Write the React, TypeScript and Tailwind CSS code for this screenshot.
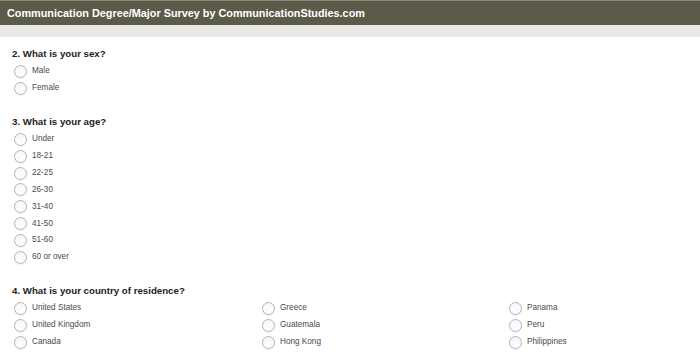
const sexOptions = ["Male", "Female"]
const ageOptions = ["Under", "18-21", "22-25", "26-30", "31-40", "41-50", "51-60", "60 or over"]
const countryCols = [
    ["United States", "United Kingdom", "Canada"],
    ["Greece", "Guatemala", "Hong Kong"],
    ["Panama", "Peru", "Philippines"]
]

const Radio = ({ label }: { label: string }) => (
    <label className="flex items-center h-[16.9px] gap-[5px] cursor-pointer">
        <span className="w-[13px] h-[13px] rounded-full border border-[#b3b3b3] bg-gradient-to-b from-[#f6f6f6] to-[#ffffff] shadow-[0_1px_1px_rgba(0,0,0,0.06)] shrink-0" />
        <span className="text-[8.2px] text-[#4a4a4a] leading-none">{label}</span>
    </label>
)

const Question = ({ title, children }: { title: string; children: React.ReactNode }) => (
    <div className="mb-[18px]">
        <h2 className="h-[14px] flex items-center pl-[12px] text-[9.7px] font-bold text-[#222222] leading-none">{title}</h2>
        <div className="mt-[2px] pl-[14px]">{children}</div>
    </div>
)

export default function App() {
    return (
        <div className="w-[700px] h-[353px] overflow-hidden bg-white" style={{ fontFamily: '"Liberation Sans", Arial, sans-serif' }}>
            <div className="h-[25px] bg-[#5c5a49] border-t border-[#8b8a7e] flex items-center pl-[7px]">
                <h1 className="text-white font-bold text-[10.85px] leading-none">Communication Degree/Major Survey by CommunicationStudies.com</h1>
            </div>
            <div className="h-[12px] bg-[#e9e9e7]" />
            <div className="pt-[10px]">
                <Question title="2. What is your sex?">
                    {sexOptions.map((o) => <Radio key={o} label={o} />)}
                </Question>
                <Question title="3. What is your age?">
                    {ageOptions.map((o) => <Radio key={o} label={o} />)}
                </Question>
                <Question title="4. What is your country of residence?">
                    <div className="grid grid-cols-[248px_247px_1fr]">
                        {countryCols.map((col, i) => (
                            <div key={i}>
                                {col.map((o) => <Radio key={o} label={o} />)}
                            </div>
                        ))}
                    </div>
                </Question>
            </div>
        </div>
    )
}
